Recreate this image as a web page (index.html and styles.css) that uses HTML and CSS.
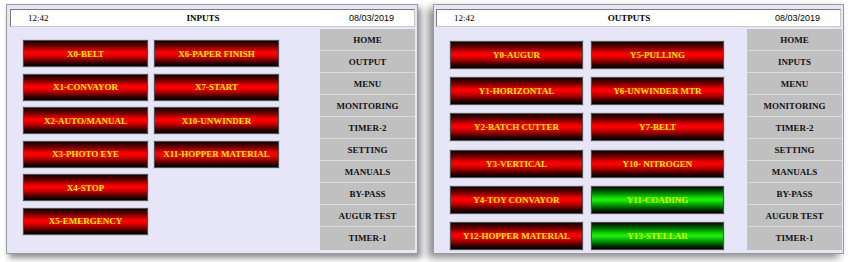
FILE: index.html
```html
<!DOCTYPE html>
<html lang="en">
<head>
    <meta charset="UTF-8">
    <title>HMI Screens</title>
    <link rel="stylesheet" href="styles.css">
</head>
<body>
    <div class="screens">
        <!-- INPUTS screen -->
        <div class="panel panel-left">
            <div class="header">
                <span class="time">12:42</span>
                <span class="title">INPUTS</span>
                <span class="date">08/03/2019</span>
            </div>
            <div class="body">
                <div class="buttons buttons-in">
                    <div class="col">
                        <div class="btn red">X0-BELT</div>
                        <div class="btn red">X1-CONVAYOR</div>
                        <div class="btn red">X2-AUTO/MANUAL</div>
                        <div class="btn red">X3-PHOTO EYE</div>
                        <div class="btn red">X4-STOP</div>
                        <div class="btn red">X5-EMERGENCY</div>
                    </div>
                    <div class="col">
                        <div class="btn red">X6-PAPER FINISH</div>
                        <div class="btn red">X7-START</div>
                        <div class="btn red">X10-UNWINDER</div>
                        <div class="btn red">X11-HOPPER MATERIAL</div>
                    </div>
                </div>
                <div class="menu">
                    <div class="menu-item">HOME</div>
                    <div class="menu-item">OUTPUT</div>
                    <div class="menu-item">MENU</div>
                    <div class="menu-item">MONITORING</div>
                    <div class="menu-item">TIMER-2</div>
                    <div class="menu-item">SETTING</div>
                    <div class="menu-item">MANUALS</div>
                    <div class="menu-item">BY-PASS</div>
                    <div class="menu-item">AUGUR TEST</div>
                    <div class="menu-item">TIMER-1</div>
                </div>
            </div>
        </div>

        <!-- OUTPUTS screen -->
        <div class="panel panel-right">
            <div class="header">
                <span class="time">12:42</span>
                <span class="title">OUTPUTS</span>
                <span class="date">08/03/2019</span>
            </div>
            <div class="body">
                <div class="buttons buttons-out">
                    <div class="col">
                        <div class="btn red">Y0-AUGUR</div>
                        <div class="btn red">Y1-HORIZONTAL</div>
                        <div class="btn red">Y2-BATCH CUTTER</div>
                        <div class="btn red">Y3-VERTICAL</div>
                        <div class="btn red">Y4-TOY CONVAYOR</div>
                        <div class="btn red">Y12-HOPPER MATERIAL</div>
                    </div>
                    <div class="col">
                        <div class="btn red">Y5-PULLING</div>
                        <div class="btn red">Y6-UNWINDER MTR</div>
                        <div class="btn red">Y7-BELT</div>
                        <div class="btn red">Y10- NITROGEN</div>
                        <div class="btn green">Y11-COADING</div>
                        <div class="btn green">Y13-STELLAR</div>
                    </div>
                </div>
                <div class="menu">
                    <div class="menu-item">HOME</div>
                    <div class="menu-item">INPUTS</div>
                    <div class="menu-item">MENU</div>
                    <div class="menu-item">MONITORING</div>
                    <div class="menu-item">TIMER-2</div>
                    <div class="menu-item">SETTING</div>
                    <div class="menu-item">MANUALS</div>
                    <div class="menu-item">BY-PASS</div>
                    <div class="menu-item">AUGUR TEST</div>
                    <div class="menu-item">TIMER-1</div>
                </div>
            </div>
        </div>
    </div>
</body>
</html>
```

FILE: styles.css
```css
* {
    margin: 0;
    padding: 0;
    box-sizing: border-box;
}

body {
    width: 850px;
    height: 262px;
    background: #ffffff;
    font-family: "Liberation Serif", "Times New Roman", serif;
    overflow: hidden;
}

.screens {
    display: flex;
    gap: 15px;
    padding: 4px 0 0 6px;
}

.panel {
    height: 250px;
    background: #e6e6f8;
    border: 1px solid #9a9a9a;
    display: flex;
    flex-direction: column;
    padding: 4px 2px 3px 3px;
}

.panel-left {
    width: 412px;
    box-shadow: 3px 4px 6px rgba(0,0,0,0.45);
}

.panel-right {
    width: 411px;
    padding: 4px 1px 3px 2px;
    box-shadow: -5px 4px 8px rgba(0,0,0,0.45);
}

.header {
    height: 18px;
    background: #fff;
    border: 1px solid #7a7a7a;
    border-right-color: #c8c8c8;
    border-bottom-color: #c8c8c8;
    display: grid;
    grid-template-columns: 130px 124px 1fr;
    align-items: center;
    font-size: 9px;
    color: #000;
}

.panel-right .header {
    margin-right: 1px;
}

.time {
    padding-left: 17px;
}

.title {
    text-align: center;
    font-weight: bold;
}

.date {
    font-family: "Liberation Sans", Arial, sans-serif;
    text-align: right;
    padding-right: 20px;
}

.body {
    flex: 1;
    display: flex;
    margin-top: 2px;
}

.buttons {
    flex: 1;
    display: flex;
}

.buttons-in {
    padding: 11px 0 0 13px;
    gap: 6px;
}

.buttons-out {
    padding: 12px 0 0 14px;
    gap: 8px;
}

.col {
    display: flex;
    flex-direction: column;
}

.buttons-in .col {
    gap: 6.6px;
}

.buttons-out .col {
    gap: 8.2px;
}

.btn {
    display: flex;
    align-items: center;
    justify-content: center;
    font-size: 9px;
    font-weight: bold;
    color: #f2f200;
    border: 1px solid #505050;
    box-shadow: 0 0 0 1px #d4d4e0;
    white-space: nowrap;
}

.buttons-in .btn {
    width: 125px;
    height: 27px;
}

.buttons-out .btn {
    width: 133px;
    height: 28px;
}

.btn.red {
    background: linear-gradient(to bottom, #120000 0%, #6a0000 20%, #f00000 42%, #ff0000 50%, #b00000 68%, #300000 88%, #000 100%);
}

.btn.green {
    color: #d8f000;
    background: linear-gradient(to bottom, #001200 0%, #006a00 20%, #10e000 42%, #20f010 50%, #00a000 68%, #003000 88%, #000 100%);
}

.menu {
    width: 95px;
    display: flex;
    flex-direction: column;
    background: #c0c0c0;
}

.menu-item {
    height: 22px;
    display: flex;
    align-items: center;
    justify-content: center;
    font-size: 9px;
    font-weight: bold;
    color: #111;
    border-bottom: 1px solid #dadada;
}

.menu-item:last-child {
    border-bottom: none;
}
```
